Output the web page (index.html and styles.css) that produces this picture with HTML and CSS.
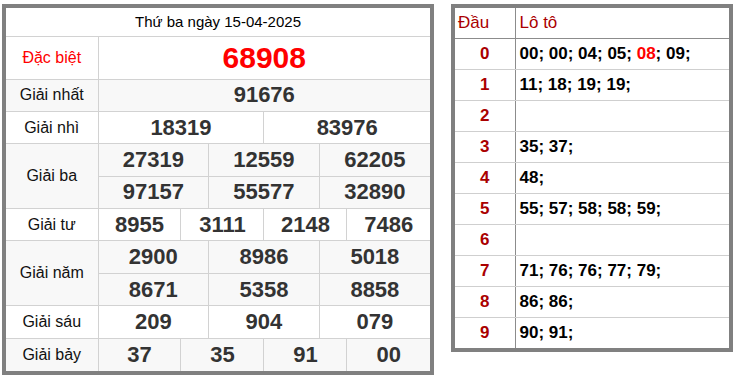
FILE: index.html
```html
<!DOCTYPE html>
<html lang="vi">
<head>
<meta charset="utf-8">
<title>Kết quả xổ số</title>
<link rel="stylesheet" href="styles.css">
</head>
<body>
<div class="page">
  <div class="kq-wrap">
    <table class="kq">
      <colgroup>
        <col class="c-label">
        <col><col><col><col><col><col><col><col><col><col><col><col>
      </colgroup>
      <tr class="r-head"><td colspan="13" class="head">Thứ ba ngày 15-04-2025</td></tr>
      <tr class="r-db"><td class="label red">Đặc biệt</td><td colspan="12" class="num db">68908</td></tr>
      <tr class="r alt"><td class="label">Giải nhất</td><td colspan="12" class="num">91676</td></tr>
      <tr class="r"><td class="label">Giải nhì</td><td colspan="6" class="num">18319</td><td colspan="6" class="num">83976</td></tr>
      <tr class="r alt"><td class="label" rowspan="2">Giải ba</td><td colspan="4" class="num">27319</td><td colspan="4" class="num">12559</td><td colspan="4" class="num">62205</td></tr>
      <tr class="r alt"><td colspan="4" class="num">97157</td><td colspan="4" class="num">55577</td><td colspan="4" class="num">32890</td></tr>
      <tr class="r"><td class="label">Giải tư</td><td colspan="3" class="num">8955</td><td colspan="3" class="num">3111</td><td colspan="3" class="num">2148</td><td colspan="3" class="num">7486</td></tr>
      <tr class="r alt"><td class="label" rowspan="2">Giải năm</td><td colspan="4" class="num">2900</td><td colspan="4" class="num">8986</td><td colspan="4" class="num">5018</td></tr>
      <tr class="r alt"><td colspan="4" class="num">8671</td><td colspan="4" class="num">5358</td><td colspan="4" class="num">8858</td></tr>
      <tr class="r"><td class="label">Giải sáu</td><td colspan="4" class="num">209</td><td colspan="4" class="num">904</td><td colspan="4" class="num">079</td></tr>
      <tr class="r alt"><td class="label">Giải bảy</td><td colspan="3" class="num">37</td><td colspan="3" class="num">35</td><td colspan="3" class="num">91</td><td colspan="3" class="num">00</td></tr>
    </table>
  </div>
  <div class="loto-wrap">
    <table class="loto">
      <colgroup><col class="c-dau"><col></colgroup>
      <tr class="l-head"><th class="dau-h">Đầu</th><th class="loto-h">Lô tô</th></tr>
      <tr><td class="dau">0</td><td class="val">00; 00; 04; 05; <span class="hl">08</span>; 09;</td></tr>
      <tr><td class="dau">1</td><td class="val">11; 18; 19; 19;</td></tr>
      <tr><td class="dau">2</td><td class="val"></td></tr>
      <tr><td class="dau">3</td><td class="val">35; 37;</td></tr>
      <tr><td class="dau">4</td><td class="val">48;</td></tr>
      <tr><td class="dau">5</td><td class="val">55; 57; 58; 58; 59;</td></tr>
      <tr><td class="dau">6</td><td class="val"></td></tr>
      <tr><td class="dau">7</td><td class="val">71; 76; 76; 77; 79;</td></tr>
      <tr><td class="dau">8</td><td class="val">86; 86;</td></tr>
      <tr><td class="dau">9</td><td class="val">90; 91;</td></tr>
    </table>
  </div>
</div>
</body>
</html>
```
FILE: styles.css
```css
* { box-sizing: border-box; }
html, body { margin: 0; padding: 0; background: #fff; }
body { font-family: "Liberation Sans", Arial, sans-serif; color: #000; }

.page {
  display: flex;
  align-items: flex-start;
  gap: 17px;
  padding: 4px 0 0 2px;
}

/* ---------- results table ---------- */
.kq-wrap {
  width: 432px;
  border: 4px solid #808080;
}
.kq {
  width: 424px;
  table-layout: fixed;
  border-collapse: collapse;
  border-style: hidden;
}
.kq .c-label { width: 92px; }
.kq td {
  border: 1px solid #d2d2d2;
  padding: 0;
  text-align: center;
  vertical-align: middle;
  white-space: nowrap;
  overflow: hidden;
}
.kq .r-head { height: 28px; }
.kq .r-db { height: 43px; }
.kq .r { height: 32.4px; }
.kq .alt td { background: #f8f8f8; }
.kq .head { font-size: 15px; color: #000; }
.kq .label { font-size: 16px; color: #111; }
.kq .label.red { color: #f00; }
.kq .num { font-size: 22px; font-weight: bold; color: #333; }
.kq .num.db { font-size: 30px; color: #f00; }

/* ---------- loto table ---------- */
.loto-wrap {
  width: 282px;
  border: 4px solid #808080;
}
.loto {
  width: 274px;
  table-layout: fixed;
  border-collapse: collapse;
  border-style: hidden;
}
.loto .c-dau { width: 60px; }
.loto th, .loto td {
  border: 1px solid #cfcfcf;
  padding: 0;
  vertical-align: middle;
  white-space: nowrap;
}
.loto th:first-child, .loto td:first-child { border-right: 1px solid #8c8c8c; }
.loto .l-head { height: 30px; }
.loto .l-head th { border-bottom: 1px solid #8c8c8c; font-weight: normal; font-size: 17px; color: #a00; text-align: left; }
.loto .dau-h { padding-left: 3px; }
.loto .loto-h { padding-left: 4px; }
.loto tr { height: 31px; }
.loto .dau { text-align: center; font-size: 17px; font-weight: bold; color: #a00; }
.loto .val { padding-left: 4px; font-size: 17px; font-weight: bold; color: #000; }
.loto .hl { color: #f00; }
```
